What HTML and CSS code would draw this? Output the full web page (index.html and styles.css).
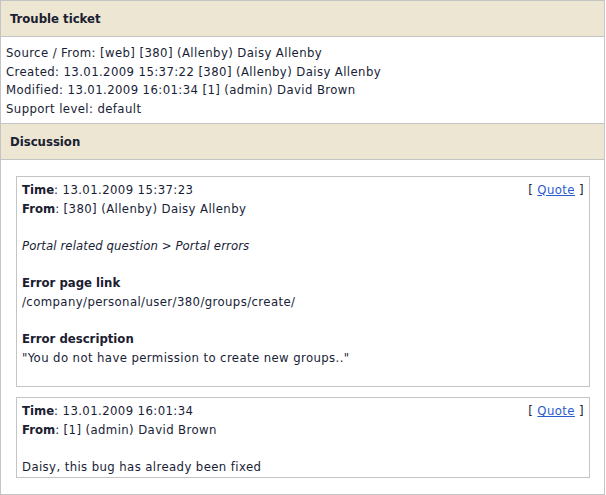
FILE: index.html
```html
<!DOCTYPE html>
<html>
<head>
<meta charset="utf-8">
<link rel="stylesheet" href="styles.css">
</head>
<body>
<div class="ticket">
  <div class="hdr">Trouble ticket</div>
  <div class="info">
    <div>Source / From: [web] [380] (Allenby) Daisy Allenby</div>
    <div>Created: 13.01.2009 15:37:22 [380] (Allenby) Daisy Allenby</div>
    <div>Modified: 13.01.2009 16:01:34 [1] (admin) David Brown</div>
    <div>Support level: default</div>
  </div>
  <div class="hdr">Discussion</div>
  <div class="discussion">
    <div class="msg">
      <span class="quote">[ <a href="#">Quote</a> ]</span>
      <div><b>Time</b>: 13.01.2009 15:37:23</div>
      <div><b>From</b>: [380] (Allenby) Daisy Allenby</div>
      <div class="blank"></div>
      <div><i>Portal related question &gt; Portal errors</i></div>
      <div class="blank"></div>
      <div><b>Error page link</b></div>
      <div>/company/personal/user/380/groups/create/</div>
      <div class="blank"></div>
      <div><b>Error description</b></div>
      <div>"You do not have permission to create new groups.."</div>
      <div class="blank"></div>
    </div>
    <div class="msg">
      <span class="quote">[ <a href="#">Quote</a> ]</span>
      <div><b>Time</b>: 13.01.2009 16:01:34</div>
      <div><b>From</b>: [1] (admin) David Brown</div>
      <div class="blank"></div>
      <div>Daisy, this bug has already been fixed</div>
    </div>
  </div>
</div>
</body>
</html>
```
FILE: styles.css
```css
html, body {
  margin: 0;
  padding: 0;
  background: #fff;
}
body {
  font-family: "DejaVu Sans Condensed", "DejaVu Sans", sans-serif;
  font-stretch: condensed;
  font-size: 13px;
  line-height: 18.67px;
  color: #181d36;
  letter-spacing: 0.4px;
}
b, i, .hdr {
  letter-spacing: 0;
}
i {
  letter-spacing: 0.1px;
}
.ticket {
  width: 605px;
  height: 495px;
  box-sizing: border-box;
  border: 1px solid #c4c4c4;
  display: flex;
  flex-direction: column;
}
.hdr {
  height: 35px;
  line-height: 35px;
  background: #ede6d3;
  border-bottom: 1px solid #c4c4c4;
  padding-left: 9px;
  font-weight: bold;
  color: #1a2030;
}
.info {
  padding: 7px 5px 4px;
  height: 75px;
  border-bottom: 1px solid #c4c4c4;
}
.discussion {
  padding: 16px 14px 16px 15px;
  display: flex;
  flex-direction: column;
  gap: 10px;
}
.msg {
  border: 1px solid #c4c4c4;
  padding: 4px 5px 0;
}
.msg b {
  color: #1a2030;
}
.blank {
  height: 18.67px;
}
.quote {
  float: right;
}
.quote a {
  color: #2a5bd0;
  text-decoration: underline;
}
```
